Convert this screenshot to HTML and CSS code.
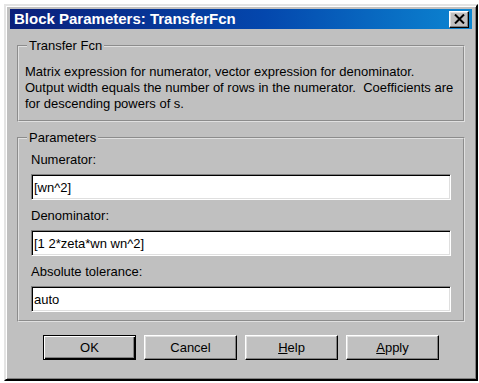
FILE: index.html
```html
<!DOCTYPE html>
<html lang="en">
<head>
  <meta charset="UTF-8" />
  <title>Block Parameters: TransferFcn</title>
  <link rel="stylesheet" href="styles.css">
</head>
<body>
  <div class="window">
    <div class="titlebar">
      <span class="title">Block Parameters: TransferFcn</span>
      <button class="close" title="Close">
        <svg width="11" height="10" viewBox="0 0 11 10">
          <path d="M1 0.5 L10 9.5 M10 0.5 L1 9.5" stroke="#000" stroke-width="2"/>
        </svg>
      </button>
    </div>

    <div class="content">
      <fieldset class="group">
        <legend>Transfer Fcn</legend>
        <div class="desc">
          Matrix expression for numerator, vector expression for denominator.<br>
          Output width equals the number of rows in the numerator.&nbsp; Coefficients are<br>
          for descending powers of s.
        </div>
      </fieldset>

      <fieldset class="group params">
        <legend>Parameters</legend>
        <div class="fields">
          <label for="num">Numerator:</label>
          <input type="text" id="num" value="[wn^2]">
          <label for="den">Denominator:</label>
          <input type="text" id="den" value="[1 2*zeta*wn wn^2]">
          <label for="tol">Absolute tolerance:</label>
          <input type="text" id="tol" value="auto">
        </div>
      </fieldset>

      <div class="buttons">
        <button class="btn default">OK</button>
        <button class="btn">Cancel</button>
        <button class="btn"><u>H</u>elp</button>
        <button class="btn"><u>A</u>pply</button>
      </div>
    </div>
  </div>
</body>
</html>
```

FILE: styles.css
```css
body {
  margin: 0;
  background: #fff;
  font-family: "Liberation Sans", Arial, sans-serif;
  font-size: 13px;
  color: #000;
}
.window {
  margin: 4px 0 0 4px;
  width: 474px;
  height: 377px;
  box-sizing: border-box;
  background: #c0c0c0;
  border: 2px solid;
  border-color: #e4e4e4 #000 #000 #e4e4e4;
  box-shadow: inset 1px 1px #fff, inset -1px -1px #808080;
  padding: 3px 4px;
}
.titlebar {
  height: 20px;
  display: flex;
  align-items: center;
  justify-content: space-between;
  background: linear-gradient(to right, #0a1f7a, #0447ad 55%, #0c86d2);
  padding: 0 3px 0 4px;
}
.title {
  color: #fff;
  font-weight: bold;
  font-size: 15px;
  line-height: 20px;
}
.close {
  width: 20px;
  height: 17px;
  padding: 0;
  display: flex;
  align-items: center;
  justify-content: center;
  background: #c0c0c0;
  border: 1px solid;
  border-color: #fff #000 #000 #fff;
  box-shadow: inset -1px -1px #808080, inset 1px 1px #dfdfdf;
}
.content {
  padding: 9px 7px 0;
}
.group {
  margin: 0;
  padding: 0;
  min-inline-size: 0;
  border: 2px groove #e0e0e0;
}
.group legend {
  margin-left: 8px;
  padding: 0 2px;
  line-height: 16px;
}
.desc {
  padding: 10px 6px 8px;
  line-height: 16px;
}
.params {
  margin-top: 8px;
}
.fields {
  display: flex;
  flex-direction: column;
  padding: 6px 12px 0;
}
.fields label {
  line-height: 16px;
  margin-bottom: 6px;
}
.fields input {
  height: 26px;
  box-sizing: border-box;
  margin: 0 0 8px;
  padding: 0 2px;
  font: inherit;
  background: #fff;
  border: 1px solid;
  border-color: #808080 #fff #fff #808080;
  box-shadow: inset 1px 1px #000, inset -1px -1px #dfdfdf;
  outline: none;
}
.buttons {
  display: flex;
  justify-content: center;
  gap: 8px;
  margin-top: 13px;
}
.btn {
  width: 93px;
  height: 25px;
  padding: 0;
  font: inherit;
  color: #000;
  background: #c0c0c0;
  border: 1px solid;
  border-color: #fff #000 #000 #fff;
  box-shadow: inset -1px -1px #808080, inset 1px 1px #dfdfdf;
}
.btn.default {
  border-color: #000;
  box-shadow: inset 1px 1px #fff, inset -1px -1px #000, inset -2px -2px #808080;
}
```
